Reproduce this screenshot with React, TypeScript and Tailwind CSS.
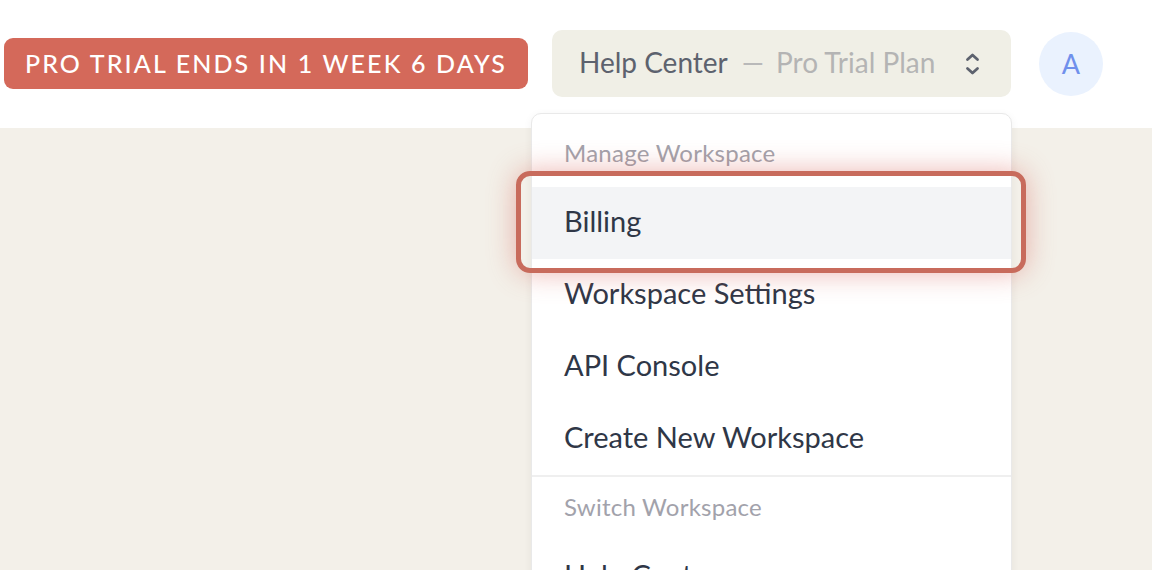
import React from "react";

const menuItems = ["Billing", "Workspace Settings", "API Console", "Create New Workspace"];

const UpDownIcon: React.FC = () => (
  <svg width="15" height="22" viewBox="0 0 15 22" fill="none" stroke="#5d626e" strokeWidth="2.8" strokeLinecap="round" strokeLinejoin="round">
    <polyline points="2.5,6.5 7.5,2 12.5,6.5" />
    <polyline points="2.5,15.5 7.5,20 12.5,15.5" />
  </svg>
);

const App: React.FC = () => {
  return (
    <div
      className="w-full h-[570px] overflow-hidden bg-[#f3f0e9] flex flex-col"
      style={{ fontFamily: "Lato, 'Open Sans', sans-serif" }}
    >
      <header className="h-[128px] bg-white flex items-center pl-[4px] shrink-0">
        <div className="h-[51px] w-[524px] flex items-center justify-center rounded-[9px] bg-[#d4695a] text-white text-[25px] font-medium tracking-[0.085em] uppercase whitespace-nowrap -mt-[1px]">
          Pro Trial Ends in 1 Week 6 Days
        </div>

        <div className="relative ml-[24px] -mt-[1px]">
          <button className="h-[67px] w-[459px] rounded-[10px] bg-[#f0efe6] flex items-center pl-[27px] pr-[31px] text-[28px] whitespace-nowrap">
            <span className="text-[#5d626e] pb-[4px]">Help Center</span>
            <span className="text-[#b9b9b9] ml-[14px] pb-[4px]">—</span>
            <span className="text-[#b4b4b4] ml-[12px] pb-[4px]">Pro Trial Plan</span>
            <span className="ml-auto">
              <UpDownIcon />
            </span>
          </button>

          {/* dropdown */}
          <div className="absolute left-[-21px] top-[83px] w-[481px] h-[520px] bg-white border border-[#e9e9e9] rounded-[10px] shadow-[0_2px_8px_rgba(0,0,0,0.06)] z-10">
            <div className="h-[73px] pt-[25px] px-[32px] text-[24px] leading-[28px] tracking-[0.01em] text-[#a2a2ab]">
              Manage Workspace
            </div>
            {menuItems.map((item, i) => (
              <div
                key={item}
                className={
                  i === 0
                    ? "h-[72px] flex items-center px-[32px] pb-[4px] text-[29px] text-[#2f3747] bg-[#f3f4f6]"
                    : "h-[72px] flex items-center px-[32px] pb-[4px] text-[29px] text-[#2f3747]"
                }
              >
                {item}
              </div>
            ))}
            <div className="h-[2px] bg-[#efefef]" />
            <div className="pt-[16px] px-[32px] text-[24px] leading-[28px] tracking-[0.01em] text-[#a2a2ab]">
              Switch Workspace
            </div>
            <div className="h-[72px] flex items-center px-[32px] text-[29px] text-[#2f3747] mt-[18px]">
              Help Center
            </div>

            {/* highlight ring around Billing */}
            <div className="absolute left-[-16px] top-[57px] w-[510px] h-[102px] rounded-[14px] border-[5px] border-[#c86b5c] shadow-[0_0_28px_rgba(214,96,84,0.45)] pointer-events-none" />
          </div>
        </div>

        <div className="ml-[28px] w-[64px] h-[64px] rounded-full bg-[#eaf2fe] flex items-center justify-center text-[27px] text-[#7090ec]">
          A
        </div>
      </header>
      <main className="flex-1" />
    </div>
  );
};

export default App;
